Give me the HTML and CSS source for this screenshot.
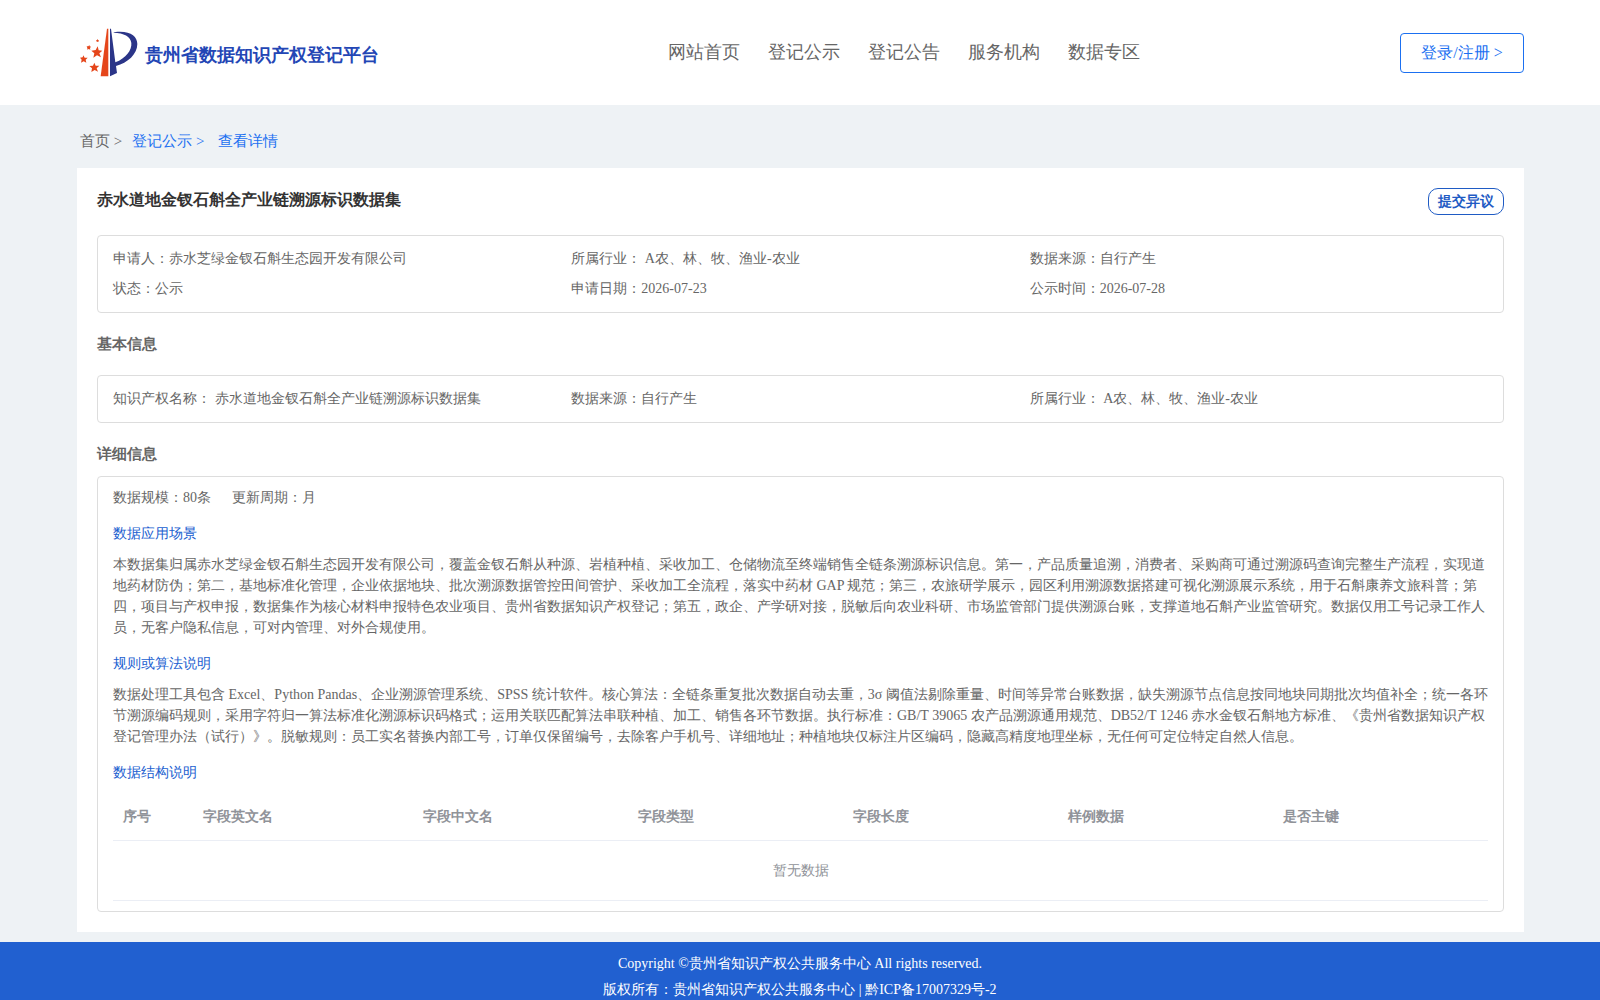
FILE: index.html
```html
<!DOCTYPE html>
<html lang="zh">
<head>
<meta charset="utf-8">
<meta name="viewport" content="width=device-width, initial-scale=1">
<title>贵州省数据知识产权登记平台</title>
<link rel="stylesheet" href="styles.css">
</head>
<body>
<header class="header">
  <a class="brand" href="#">
    <svg class="brand-mark" viewBox="21 20 195 165" aria-hidden="true">
      <path fill="#e5461b" d="M111 28h4v143H92z"/>
      <path fill="#2b3588" d="M120 28h3l13 101c32-12 50-37 48-58-2-20-22-30-54-31 2-2 10-3 20-3 35 0 52 16 52 37 0 30-29 57-64 66l3 21-21 10z"/>
      <g fill="#e5461b">
        <path d="M83 81l3 12 11 1-9 8 5 12-12-6-11 7 3-13-9-8 13-2z"/>
        <path d="M73 130l4 9 11 0-8 8 4 10-10-5-10 6 2-11-8-7 11-1z"/>
        <path d="M40 108l4 7 9 0-6 6 2 9-8-4-8 4 2-9-5-6 8-1z"/>
        <path d="M58 77l1 4 4 1-3 4 1 5-5-2-4 2 0-5-2-5 5 0z"/>
        <path d="M83 59l1 3 3 0-2 3 1 3-3-1-3 1 0-3-2-3 3 0z"/>
      </g>
    </svg>
    <span class="brand-name">贵州省数据知识产权登记平台</span>
  </a>
  <nav class="nav">
    <a href="#">网站首页</a>
    <a href="#">登记公示</a>
    <a href="#">登记公告</a>
    <a href="#">服务机构</a>
    <a href="#">数据专区</a>
  </nav>
  <button class="login" type="button">登录/注册 &gt;</button>
</header>

<main class="main">
  <nav class="crumbs">
    <a class="crumb-home" href="#">首页 &gt;</a>
    <a class="crumb-list" href="#">登记公示 &gt;</a>
    <a href="#">查看详情</a>
  </nav>

  <article class="panel">
    <div class="panel-head">
      <h1 class="title">赤水道地金钗石斛全产业链溯源标识数据集</h1>
      <button class="objection" type="button">提交异议</button>
    </div>

    <div class="box facts">
      <div>申请人：赤水芝绿金钗石斛生态园开发有限公司</div>
      <div>所属行业： A农、林、牧、渔业-农业</div>
      <div>数据来源：自行产生</div>
      <div>状态：公示</div>
      <div>申请日期：2026-07-23</div>
      <div>公示时间：2026-07-28</div>
    </div>

    <h2 class="section basic">基本信息</h2>
    <div class="box facts">
      <div>知识产权名称： 赤水道地金钗石斛全产业链溯源标识数据集</div>
      <div>数据来源：自行产生</div>
      <div>所属行业： A农、林、牧、渔业-农业</div>
    </div>

    <h2 class="section">详细信息</h2>
    <div class="box details">
      <div class="scale"><span>数据规模：80条</span><span>更新周期：月</span></div>
      <h3 class="sub">数据应用场景</h3>
      <p class="text">本数据集归属赤水芝绿金钗石斛生态园开发有限公司，覆盖金钗石斛从种源、岩植种植、采收加工、仓储物流至终端销售全链条溯源标识信息。第一，产品质量追溯，消费者、采购商可通过溯源码查询完整生产流程，实现道地药材防伪；第二，基地标准化管理，企业依据地块、批次溯源数据管控田间管护、采收加工全流程，落实中药材 GAP 规范；第三，农旅研学展示，园区利用溯源数据搭建可视化溯源展示系统，用于石斛康养文旅科普；第四，项目与产权申报，数据集作为核心材料申报特色农业项目、贵州省数据知识产权登记；第五，政企、产学研对接，脱敏后向农业科研、市场监管部门提供溯源台账，支撑道地石斛产业监管研究。数据仅用工号记录工作人员，无客户隐私信息，可对内管理、对外合规使用。</p>
      <h3 class="sub">规则或算法说明</h3>
      <p class="text">数据处理工具包含 Excel、Python Pandas、企业溯源管理系统、SPSS 统计软件。核心算法：全链条重复批次数据自动去重，3σ 阈值法剔除重量、时间等异常台账数据，缺失溯源节点信息按同地块同期批次均值补全；统一各环节溯源编码规则，采用字符归一算法标准化溯源标识码格式；运用关联匹配算法串联种植、加工、销售各环节数据。执行标准：GB/T 39065 农产品溯源通用规范、DB52/T 1246 赤水金钗石斛地方标准、《贵州省数据知识产权登记管理办法（试行）》。脱敏规则：员工实名替换内部工号，订单仅保留编号，去除客户手机号、详细地址；种植地块仅标注片区编码，隐藏高精度地理坐标，无任何可定位特定自然人信息。</p>
      <h3 class="sub">数据结构说明</h3>
      <table class="fields">
        <colgroup><col class="col-index"><col class="col-name"><col><col><col><col><col></colgroup>
        <thead>
          <tr><th>序号</th><th>字段英文名</th><th>字段中文名</th><th>字段类型</th><th>字段长度</th><th>样例数据</th><th>是否主键</th></tr>
        </thead>
        <tbody>
          <tr><td class="empty" colspan="7">暂无数据</td></tr>
        </tbody>
      </table>
    </div>
  </article>
</main>

<footer class="footer">
  <div>Copyright ©贵州省知识产权公共服务中心 All rights reserved.</div>
  <div>版权所有：贵州省知识产权公共服务中心 | 黔ICP备17007329号-2</div>
</footer>
</body>
</html>
```

FILE: styles.css
```css
* { box-sizing: border-box; }

body {
  margin: 0;
  background: #eef2f5;
  color: #666;
  font: 14px/21px "Liberation Serif", serif;
}

h1, h2, h3, p { margin: 0; }
a { color: inherit; text-decoration: none; }
button { font-family: inherit; background: #fff; cursor: pointer; }

.header {
  display: flex;
  align-items: center;
  height: 105px;
  padding: 0 76px 0 77px;
  background: #fff;
}

.brand {
  display: flex;
  align-items: center;
  gap: 3px;
  padding: 2px 28px 0 0;
}
.brand-mark { width: 65px; height: 55px; }
.brand-name { padding-top: 2px; color: #2346b5; font-size: 18px; font-weight: bold; line-height: 24px; }

.nav {
  display: flex;
  gap: 28px;
  margin: 0 auto;
  padding-bottom: 2px;
  font-size: 18px;
  line-height: 24px;
}

.login {
  width: 124px;
  height: 40px;
  padding: 2px 0 0;
  border: 1px solid #1b70f1;
  border-radius: 4px;
  color: #1b70f1;
  font-size: 16px;
}

.main { padding: 0 76px 10px 77px; }

.crumbs {
  display: flex;
  align-items: center;
  gap: 10px;
  height: 63px;
  padding: 10px 3px 0;
  color: #1b70f1;
  font-size: 15px;
}
.crumb-home { color: #666; }
.crumb-list { margin-right: 4px; }

.panel { padding: 20px; background: #fff; }

.panel-head {
  display: flex;
  justify-content: space-between;
  align-items: flex-start;
  height: 47px;
}
.title { color: #333; font-size: 16px; line-height: 24px; }

.objection {
  width: 76px;
  height: 27px;
  padding: 0;
  border: 1px solid #1f5bc4;
  border-radius: 10px;
  color: #1f5bc4;
  font-size: 14px;
  font-weight: bold;
}

.box {
  border: 1px solid #ddd;
  border-radius: 4px;
}

.facts {
  display: grid;
  grid-template-columns: repeat(3, 1fr);
  padding: 8px 15px;
  line-height: 30px;
}

.section { padding: 20px 0 11px; font-size: 15px; line-height: 22px; }
.basic { padding-bottom: 20px; }

.details { padding: 10px 15px; }
.scale { display: flex; gap: 21px; }
.sub {
  margin: 15px 0 10px;
  color: #2160d0;
  font-size: 14px;
  font-weight: normal;
}

.fields {
  width: 100%;
  table-layout: fixed;
  border-collapse: collapse;
  color: #909399;
}
.col-index { width: 80px; }
.col-name { width: 220px; }
.fields th { height: 47px; padding: 1px 10px 0; text-align: left; border-bottom: 1px solid #ebeef5; }
.fields td { height: 60px; padding: 0 10px; border-bottom: 1px solid #ebeef5; }
.fields .empty { text-align: center; }

.footer {
  padding: 9px 0 8px;
  background: #2160d0;
  color: #fff;
  line-height: 26px;
  text-align: center;
}
```
